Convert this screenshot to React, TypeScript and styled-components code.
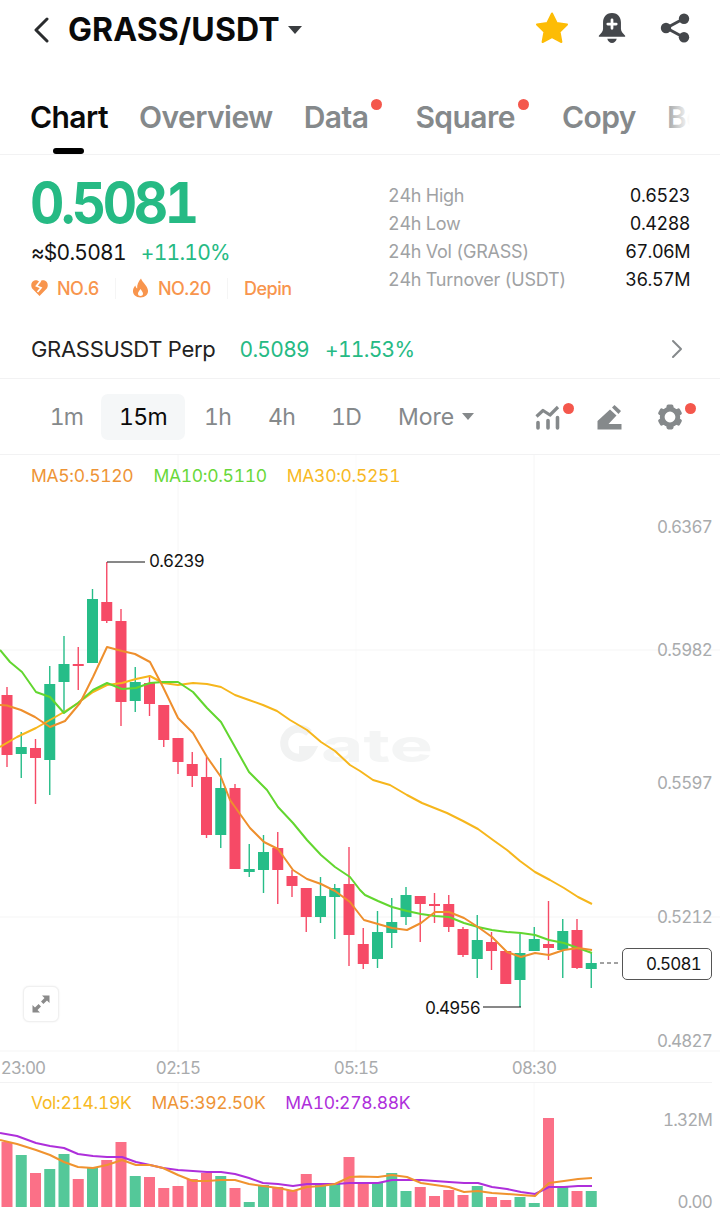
import React from "react";
import styled, { createGlobalStyle } from "styled-components";

const GlobalStyle = createGlobalStyle`
  * { box-sizing: border-box; }
  html, body { margin: 0; padding: 0; background: #fff; }
  body {
    font-family: Inter, "Noto Sans", sans-serif;
    font-variant-numeric: tabular-nums;
    color: #141414;
  }
`;

const Page = styled.div`
  width: 720px;
  height: 1210px;
  overflow: hidden;
  background: #fff;
  display: flex;
  flex-direction: column;
`;

/* ---------- header ---------- */
const Header = styled.header`
  height: 60px;
  display: flex;
  align-items: center;
  padding: 0 30px 0 32px;
`;
const Title = styled.h1`
  margin: 0 0 0 18px;
  font-size: 32px;
  line-height: 40px;
  font-weight: 700;
  letter-spacing: 0.1px;
  color: #0a0a0a;
`;
const Caret = styled.span<{ $size: number; $color: string }>`
  display: inline-block;
  margin-left: 8px;
  width: 0;
  height: 0;
  border-left: ${(p) => p.$size}px solid transparent;
  border-right: ${(p) => p.$size}px solid transparent;
  border-top: ${(p) => p.$size + 1}px solid ${(p) => p.$color};
`;
const HeaderIcons = styled.div`
  margin-left: auto;
  margin-bottom: 4px;
  display: flex;
  align-items: center;
  gap: 33px;
`;
const StarSlot = styled.span`
  display: block;
  height: 33px;
  margin-right: -5px;
`;

/* ---------- tabs ---------- */
const Tabs = styled.nav`
  position: relative;
  height: 95px;
  border-bottom: 1px solid #f2f2f3;
  display: flex;
  align-items: flex-start;
  padding: 39px 0 0 30px;
  gap: 31px;
  overflow: hidden;
  white-space: nowrap;
`;
const Tab = styled.span<{ $active?: boolean; $dot?: boolean }>`
  position: relative;
  font-size: 30px;
  line-height: 36px;
  font-weight: 600;
  letter-spacing: -0.55px;
  color: ${(p) => (p.$active ? "#0a0a0a" : "#85898b")};
  ${(p) =>
    p.$dot
      ? `margin-right: 16px; &::after { content: ""; position: absolute; right: -14px; top: 0; width: 11px; height: 11px; border-radius: 50%; background: #f4574c; }`
      : ""}
  ${(p) =>
    p.$active
      ? `&::before { content: ""; position: absolute; left: 23px; top: 49px; width: 31px; height: 6px; border-radius: 3px; background: #000; }`
      : ""}
`;
const TabFade = styled.div`
  position: absolute;
  right: 0;
  top: 0;
  bottom: 1px;
  width: 60px;
  background: linear-gradient(to right, rgba(255, 255, 255, 0), #fff 50%);
`;

/* ---------- quote ---------- */
const Quote = styled.section`
  height: 165px;
  display: grid;
  grid-template-columns: 357px 1fr;
  padding: 0 30px 0 31px;
`;
const QuoteLeft = styled.div`
  display: flex;
  flex-direction: column;
`;
const Price = styled.div`
  margin: 17px 0 0 -1px;
  font-size: 56px;
  line-height: 62px;
  font-weight: 700;
  letter-spacing: -3.6px;
  transform: scaleX(0.95);
  transform-origin: left center;
  color: #26ba84;
`;
const SubPrice = styled.div`
  margin-top: 5px;
  display: flex;
  gap: 15px;
  font-size: 21px;
  line-height: 28px;
  letter-spacing: -0.75px;
  color: #141414;
`;
const Up = styled.span`
  color: #26ba84;
`;
const TagRow = styled.div`
  margin-top: 7px;
  display: flex;
  align-items: center;
  height: 28px;
  font-size: 18px;
  font-weight: 500;
  letter-spacing: -0.5px;
  color: #f8954d;
`;
const TagItem = styled.span<{ $sep?: boolean }>`
  display: flex;
  align-items: center;
  gap: 9px;
  ${(p) => (p.$sep ? `margin-right: 16px; padding-right: 16px; border-right: 1px solid #f5f5f5;` : "")}
`;
const Stats = styled.dl`
  margin: 26px 0 0;
  display: grid;
  grid-template-columns: 1fr auto;
  grid-auto-rows: 28px;
  align-items: center;
  font-size: 18px;
  letter-spacing: -0.25px;
`;
const StatLabel = styled.dt`
  color: #9fa2a4;
`;
const StatValue = styled.dd`
  margin: 0;
  color: #141414;
  text-align: right;
  letter-spacing: -0.5px;
`;

/* ---------- perp ---------- */
const PerpRow = styled.div`
  height: 59px;
  border-bottom: 1px solid #f2f2f3;
  display: flex;
  align-items: center;
  padding: 0 36px 0 31px;
  font-size: 22px;
  letter-spacing: -0.3px;
`;
const PerpName = styled.span`
  color: #222;
  margin-right: 24px;
`;
const PerpQuote = styled.span`
  display: flex;
  gap: 16px;
  font-size: 21px;
  letter-spacing: -0.7px;
  color: #26ba84;
`;
const ChevronSlot = styled.span`
  margin-left: auto;
  display: flex;
`;

/* ---------- intervals ---------- */
const Intervals = styled.div`
  height: 76px;
  border-bottom: 1px solid #f2f2f3;
  display: flex;
  align-items: center;
  padding: 0 37px 0 32px;
`;
const Interval = styled.span<{ $active?: boolean; $w: number }>`
  width: ${(p) => p.$w}px;
  height: 46px;
  display: flex;
  align-items: center;
  justify-content: center;
  font-size: 23px;
  letter-spacing: -0.7px;
  border-radius: 7px;
  color: ${(p) => (p.$active ? "#0a0a0a" : "#85898b")};
  background: ${(p) => (p.$active ? "#f5f7f8" : "transparent")};
`;
const More = styled.span`
  margin-left: 19px;
  display: flex;
  align-items: center;
  font-size: 23px;
  color: #85898b;
`;
const ToolIcons = styled.div`
  margin-left: auto;
  display: flex;
  align-items: center;
  gap: 35px;
`;
const ToolIcon = styled.span<{ $dot?: boolean }>`
  position: relative;
  display: block;
  width: 26px;
  height: 26px;
  ${(p) =>
    p.$dot
      ? `&::after { content: ""; position: absolute; right: -12.5px; top: -1px; width: 11px; height: 11px; border-radius: 50%; background: #f4574c; }`
      : ""}
`;

/* ---------- chart ---------- */
const ChartArea = styled.section`
  position: relative;
  height: 597px;
  flex: none;
`;
const ChartSvg = styled.svg`
  display: block;
  position: absolute;
  left: 0;
  top: 0;
`;
const LegendRow = styled.div<{ $top: number }>`
  position: absolute;
  left: 31px;
  top: ${(p) => p.$top}px;
  display: flex;
  gap: 20px;
  font-size: 17.5px;
  line-height: 22px;
  letter-spacing: -0.3px;
`;
const LegendItem = styled.span<{ $color: string }>`
  color: ${(p) => p.$color};
`;
const ExpandButton = styled.div`
  position: absolute;
  left: 23px;
  top: 531px;
  width: 36px;
  height: 36px;
  border: 1px solid #f0f0f0;
  border-radius: 6px;
  background: #fff;
  box-shadow: 0 0 2px rgba(0, 0, 0, 0.08);
  display: flex;
  align-items: center;
  justify-content: center;
`;
const LastPrice = styled.div`
  position: absolute;
  left: 622px;
  top: 493px;
  width: 90px;
  height: 32px;
  border: 1px solid #555;
  border-radius: 5px;
  background: #fff;
  padding-right: 10px;
  display: flex;
  align-items: center;
  justify-content: flex-end;
  font-size: 17px;
  letter-spacing: -0.8px;
  color: #141414;
`;
const AxisLabel = styled.span<{ $top: number }>`
  position: absolute;
  right: 8px;
  top: ${(p) => p.$top}px;
  transform: translateY(-50%);
  font-size: 17px;
  line-height: 1;
  letter-spacing: -0.8px;
  color: #a9abad;
`;
const Marker = styled.span<{ $left: number; $top: number }>`
  position: absolute;
  left: ${(p) => p.$left}px;
  top: ${(p) => p.$top}px;
  transform: translateY(-50%);
  font-size: 17px;
  letter-spacing: -0.8px;
  color: #141414;
`;

/* ---------- time axis ---------- */
const TimeAxis = styled.div`
  position: relative;
  height: 31px;
  width: 712px;
  flex: none;
  border-bottom: 1px solid #f2f2f3;
`;
const TimeLabel = styled.span<{ $left: number }>`
  position: absolute;
  top: 6px;
  left: ${(p) => p.$left}px;
  transform: translateX(-50%);
  font-size: 17px;
  letter-spacing: -0.8px;
  color: #a9abad;
`;

/* ---------- volume ---------- */
const VolumeArea = styled.section`
  position: relative;
  flex: 1;
`;

/* ---------- data ---------- */
type Candle = [number, number, number, number, number]; // up, bodyTop, bodyBottom, wickTop, wickBottom
const candles: Candle[] = [
  [0, 695, 755, 687, 767], [1, 747, 754, 732, 778], [0, 748, 758, 739, 804], [1, 684, 760, 666, 795],
  [1, 664, 682, 636, 711], [0, 664, 666, 647, 690], [1, 599, 663, 589, 663], [0, 602, 621, 562, 623],
  [0, 621, 702, 609, 726], [1, 682, 701, 667, 712], [0, 683, 704, 675, 716], [0, 705, 740, 705, 747],
  [0, 738, 762, 738, 774], [0, 764, 776, 752, 787], [0, 777, 835, 757, 838], [1, 788, 835, 758, 848],
  [0, 788, 869, 784, 869], [1, 869, 872, 844, 877], [1, 852, 870, 835, 893], [0, 848, 870, 832, 904],
  [0, 876, 886, 870, 897], [0, 888, 917, 888, 932], [1, 896, 917, 877, 923], [1, 888, 897, 884, 939],
  [0, 884, 935, 847, 966], [0, 944, 964, 928, 969], [1, 932, 959, 911, 968], [1, 922, 933, 898, 948],
  [1, 895, 917, 887, 925], [0, 896, 904, 896, 942], [0, 904, 906, 893, 923], [0, 904, 927, 895, 932],
  [0, 929, 955, 927, 957], [1, 940, 959, 915, 978], [0, 942, 951, 932, 970], [0, 951, 984, 951, 984],
  [1, 953, 980, 934, 1007], [1, 939, 951, 927, 951], [0, 944, 948, 901, 960], [1, 931, 950, 919, 978],
  [0, 930, 968, 919, 969], [1, 963, 969, 952, 988],
];
const volumes: [number, number][] = [
  [0, 1142], [1, 1155], [0, 1173], [1, 1169], [1, 1154], [0, 1179], [1, 1168], [0, 1160], [0, 1142], [1, 1176],
  [0, 1177], [0, 1188], [0, 1186], [0, 1179], [0, 1173], [1, 1176], [0, 1188], [1, 1202], [1, 1185], [0, 1187],
  [0, 1190], [0, 1174], [1, 1184], [1, 1184], [0, 1157], [0, 1183], [1, 1182], [1, 1173], [1, 1191], [0, 1187],
  [0, 1196], [0, 1190], [0, 1195], [1, 1186], [0, 1197], [0, 1200], [1, 1197], [1, 1203], [0, 1118], [1, 1187],
  [0, 1191], [1, 1191],
];
const cx = (i: number) => 7 + i * 14.25;

const ma5 = "0,705 7,705.5 21,710 35,717 50,727 65,721 80,703 93,677 107,647 122,651 135,654 150,662 163,687 178,718 193,733 207,757 221,777 230,800 250,828 264,842 278,849 293,870 307,879 321,884 335,891 350,902 360,915 364,920 378,924 392,928 407,930 421,923 435,912 449,912 464,918 478,927 492,937 507,952 521,957 535,953 549,955 564,950 578,948 592,950";
const ma10 = "0,650 10,662 22,672 36,692 50,697 64,713 78,703 93,690 107,683 122,689 136,688 150,683 163,682 178,682 193,692 207,708 221,722 235,747 249,772 257,780 267,790 278,807 293,823 307,840 321,855 335,867 350,877 360,890 365,895 378,901 392,907 407,911 421,914 435,916 449,917 464,923 478,927 492,930 507,932 521,933 535,935 549,940 564,943 578,948 592,953";
const ma30 = "0,747 17,737 36,728 50,720 64,712 78,703 93,692 107,685 122,683 136,679 150,676 163,683 178,685 193,683 207,684 221,687 235,695 249,700 263,705 277,711 290,720 307,730 321,742 335,751 350,765 360,771 373,780 390,785 407,795 422,803 447,813 463,821 478,829 493,840 507,850 520,861 535,872 550,880 564,888 578,897 592,904";
const volMa5 = "0,1140 17,1144 36,1150 50,1155 64,1162 78,1167 93,1168 107,1165 122,1160 136,1165 150,1165 163,1168 178,1175 193,1181 207,1181 221,1180 235,1180 249,1184 263,1186 278,1188 293,1191 307,1187 321,1186 335,1184 350,1177 360,1176.5 378,1177 392,1175 407,1177 421,1183 435,1185 449,1187 464,1192 478,1191 492,1193 507,1194 521,1195 535,1196 549,1183 564,1181 578,1179 592,1178";
const volMa10 = "0,1133 17,1136 36,1143 50,1146 64,1148 78,1154 93,1156 107,1157 122,1157 136,1162 150,1165 163,1168 178,1170 193,1171 207,1172 221,1172 235,1174 249,1178 263,1183 278,1184 293,1186 307,1184 321,1184 335,1184 350,1183 360,1183 378,1183 392,1180 407,1180 421,1180 435,1181 449,1182 464,1183 478,1183 492,1187 507,1189 521,1192 535,1194 549,1187 564,1187 578,1186 592,1186";

const CHART_TOP = 455;

/* ---------- icons ---------- */
const BackIcon = () => (
  <svg width="18" height="26" viewBox="0 0 18 26" fill="none">
    <path d="M15 2 L4 13 L15 24" stroke="#2a2c2e" strokeWidth="3" strokeLinecap="round" strokeLinejoin="round" />
  </svg>
);
const StarIcon = () => (
  <svg width="34" height="33" viewBox="0 0 34 33">
    <path
      d="M17 1.5 L21.7 11 L32 12.5 L24.6 19.8 L26.4 30 L17 25.2 L7.6 30 L9.4 19.8 L2 12.5 L12.3 11 Z"
      fill="#fdbc05"
      stroke="#fdbc05"
      strokeWidth="2"
      strokeLinejoin="round"
    />
  </svg>
);
const BellIcon = () => (
  <svg width="30" height="30" viewBox="2.5 1 25 28.5">
    <path d="M15 1 C9 1 6.5 5.5 6.5 10 V16 C6.5 19 4.5 20.5 2.5 22.5 V23.5 H27.5 V22.5 C25.5 20.5 23.5 19 23.5 16 V10 C23.5 5.5 21 1 15 1 Z" fill="#44474b" />
    <path d="M10.5 25.5 H19.5 C19 28 17 29.5 15 29.5 C13 29.5 11 28 10.5 25.5 Z" fill="#44474b" />
    <path d="M15 7.5 V15.5 M11 11.5 H19" stroke="#fff" strokeWidth="2.6" strokeLinecap="round" />
  </svg>
);
const ShareIcon = () => (
  <svg width="30" height="30" viewBox="0 0 30 30">
    <path d="M24 5.5 L6.5 15 L24 24.5" fill="none" stroke="#44474b" strokeWidth="3" />
    <circle cx="24" cy="5.8" r="5.2" fill="#44474b" />
    <circle cx="24" cy="24.2" r="5.2" fill="#44474b" />
    <circle cx="6" cy="15" r="5.2" fill="#44474b" />
  </svg>
);
const HeartIcon = () => (
  <svg width="17" height="18" viewBox="0 0 17 18">
    <path d="M8.5 17 L1.2 9.5 C-0.8 6.5 0.4 2 4 1.3 C5.8 1 7.4 1.6 8.5 3 C9.6 1.6 11.2 1 13 1.3 C16.6 2 17.8 6.5 15.8 9.5 Z" fill="#f8954d" />
    <path d="M9.5 2 L5.5 7 L10 8.8 L6.5 13" fill="none" stroke="#fff" strokeWidth="1.7" />
  </svg>
);
const FlameIcon = () => (
  <svg width="17" height="20" viewBox="0 0 17 20" fill="#f8954d">
    <path d="M9 0.5 C10 4 15.5 7.5 16 12.5 C16.4 16.5 13 19.5 8.5 19.5 C4 19.5 0.6 16.5 1 12.5 C1.2 10.5 2.2 9 3.4 7.6 C3.6 9 4.2 10 5.2 10.5 C4.8 7 6.5 3 9 0.5 Z M8.6 11 C7.2 13 6 14 6 15.8 C6 17.2 7.2 18 8.5 18 C9.8 18 11 17.2 11 15.8 C11 14 9.6 13 8.6 11 Z" fillRule="evenodd" />
  </svg>
);
const ChevronIcon = () => (
  <svg width="14" height="20" viewBox="0 0 14 20" fill="none">
    <path d="M3 2 L11 10 L3 18" stroke="#85898b" strokeWidth="2" strokeLinecap="round" strokeLinejoin="round" />
  </svg>
);
const IndicatorIcon = () => (
  <svg width="26" height="26" viewBox="0 0 26 26">
    <path d="M1.5 12.5 L8 6.5 L15 11 L23 3" fill="none" stroke="#85898b" strokeWidth="3.2" strokeLinejoin="round" />
    <path d="M3 18.5 V24 M13 16.5 V24 M22.5 13.5 V24" stroke="#85898b" strokeWidth="3.6" strokeLinecap="round" />
  </svg>
);
const PencilIcon = () => (
  <svg width="26" height="26" viewBox="0 0 26 26" fill="#85898b">
    <path d="M18.5 1 L25 7 L22.5 10 L16 3.6 Z" />
    <path d="M14 5.5 L20.5 11.6 L12.5 20 H25.5 V25.5 H1.5 L1.5 17 Z" />
  </svg>
);
const GearIcon = () => (
  <svg width="26" height="26" viewBox="0 0 26 26">
    <circle cx="13" cy="13" r="7.8" fill="none" stroke="#85898b" strokeWidth="4.8" />
    {[30, 90, 150, 210, 270, 330].map((a) => (
      <rect key={a} x="9.5" y="0.6" width="7" height="5" rx="1.8" fill="#85898b" transform={`rotate(${a - 90} 13 13)`} />
    ))}
  </svg>
);
const ExpandIcon = () => (
  <svg width="20" height="20" viewBox="0 0 20 20" fill="#8a8a8a">
    <path d="M11 1.5 H18.5 V9 L16 6.5 L12.4 10 L10 7.6 L13.5 4 Z" />
    <path d="M9 18.5 H1.5 V11 L4 13.5 L7.6 10 L10 12.4 L6.5 16 Z" />
  </svg>
);
const Watermark = () => (
  <g>
    <path d="M309 733 A14.5 14.5 0 1 0 311.5 750 H299" fill="none" stroke="#f1f2f2" strokeWidth="8" />
    <text
      x="321"
      y="762"
      fontFamily="Inter, sans-serif"
      fontSize="46"
      fontWeight="700"
      fill="#f4f5f5"
      textLength="112"
      lengthAdjust="spacingAndGlyphs"
    >
      ate
    </text>
  </g>
);

/* ---------- page ---------- */
const candleUp = "#26bd88";
const candleDown = "#f64a66";
const volUp = "#54c899";
const volDown = "#fb7087";

export default function App() {
  return (
    <Page>
      <GlobalStyle />
      <Header>
        <BackIcon />
        <Title>GRASS/USDT</Title>
        <Caret $size={7} $color="#3a3d40" />
        <HeaderIcons>
          <StarSlot><StarIcon /></StarSlot>
          <BellIcon />
          <ShareIcon />
        </HeaderIcons>
      </Header>

      <Tabs>
        <Tab $active>Chart</Tab>
        <Tab>Overview</Tab>
        <Tab $dot>Data</Tab>
        <Tab $dot>Square</Tab>
        <Tab>Copy</Tab>
        <Tab>Bots</Tab>
        <TabFade />
      </Tabs>

      <Quote>
        <QuoteLeft>
          <Price>0.5081</Price>
          <SubPrice>
            <span>≈$0.5081</span>
            <Up>+11.10%</Up>
          </SubPrice>
          <TagRow>
            <TagItem $sep>
              <HeartIcon />
              NO.6
            </TagItem>
            <TagItem $sep>
              <FlameIcon />
              NO.20
            </TagItem>
            <TagItem>Depin</TagItem>
          </TagRow>
        </QuoteLeft>
        <Stats>
          <StatLabel>24h High</StatLabel>
          <StatValue>0.6523</StatValue>
          <StatLabel>24h Low</StatLabel>
          <StatValue>0.4288</StatValue>
          <StatLabel>24h Vol (GRASS)</StatLabel>
          <StatValue>67.06M</StatValue>
          <StatLabel>24h Turnover (USDT)</StatLabel>
          <StatValue>36.57M</StatValue>
        </Stats>
      </Quote>

      <PerpRow>
        <PerpName>GRASSUSDT Perp</PerpName>
        <PerpQuote>
          <span>0.5089</span>
          <span>+11.53%</span>
        </PerpQuote>
        <ChevronSlot><ChevronIcon /></ChevronSlot>
      </PerpRow>

      <Intervals>
        <Interval $w={69}>1m</Interval>
        <Interval $w={84} $active>15m</Interval>
        <Interval $w={65}>1h</Interval>
        <Interval $w={63}>4h</Interval>
        <Interval $w={66}>1D</Interval>
        <More>
          More
          <Caret $size={6} $color="#85898b" />
        </More>
        <ToolIcons>
          <ToolIcon $dot><IndicatorIcon /></ToolIcon>
          <ToolIcon><PencilIcon /></ToolIcon>
          <ToolIcon $dot><GearIcon /></ToolIcon>
        </ToolIcons>
      </Intervals>

      <ChartArea>
        <ChartSvg width="720" height="597" viewBox={`0 ${CHART_TOP} 720 597`}>
          {[178, 534].map((x) => (
            <line key={x} x1={x} x2={x} y1={CHART_TOP} y2={1052} stroke="#f6f6f6" />
          ))}
          <line x1={356} x2={356} y1={CHART_TOP} y2={1052} stroke="#fbfbfb" />
          {[650, 917, 1051].map((y) => (
            <line key={y} x1={0} x2={720} y1={y} y2={y} stroke="#f5f5f5" />
          ))}
          <Watermark />
          {candles.map(([up, t, b, wt, wb], i) => {
            const c = up ? candleUp : candleDown;
            const x = cx(i);
            return (
              <g key={i}>
                <line x1={x} x2={x} y1={wt} y2={wb} stroke={c} strokeWidth="1.4" />
                <rect x={x - 5.5} y={t} width="11" height={b - t} fill={c} />
              </g>
            );
          })}
          <polyline points={ma30} fill="none" stroke="#f6b61c" strokeWidth="2" strokeLinejoin="round" />
          <polyline points={ma10} fill="none" stroke="#62d62f" strokeWidth="2" strokeLinejoin="round" />
          <polyline points={ma5} fill="none" stroke="#ee8f2d" strokeWidth="2" strokeLinejoin="round" />
          <path d="M145 562 H107" stroke="#111" strokeWidth="1" />
          <path d="M483 1007 H521" stroke="#111" strokeWidth="1" />
          <path d="M600 963 H621" stroke="#444" strokeWidth="1" strokeDasharray="4 3" />
        </ChartSvg>

        <LegendRow $top={10}>
          <LegendItem $color="#ee9436">MA5:0.5120</LegendItem>
          <LegendItem $color="#68d83a">MA10:0.5110</LegendItem>
          <LegendItem $color="#f7b924">MA30:0.5251</LegendItem>
        </LegendRow>

        <AxisLabel $top={72}>0.6367</AxisLabel>
        <AxisLabel $top={195}>0.5982</AxisLabel>
        <AxisLabel $top={328}>0.5597</AxisLabel>
        <AxisLabel $top={462}>0.5212</AxisLabel>
        <AxisLabel $top={586}>0.4827</AxisLabel>

        <Marker $left={149} $top={106}>0.6239</Marker>
        <Marker $left={425} $top={553}>0.4956</Marker>

        <LastPrice>0.5081</LastPrice>
        <ExpandButton><ExpandIcon /></ExpandButton>
      </ChartArea>

      <TimeAxis>
        <TimeLabel $left={23}>23:00</TimeLabel>
        <TimeLabel $left={178}>02:15</TimeLabel>
        <TimeLabel $left={356}>05:15</TimeLabel>
        <TimeLabel $left={534}>08:30</TimeLabel>
      </TimeAxis>

      <VolumeArea>
        <ChartSvg width="720" height="127" viewBox="0 1083 720 127">
          {[178, 534].map((x) => (
            <line key={x} x1={x} x2={x} y1={1083} y2={1207} stroke="#f8f8f8" />
          ))}
          {volumes.map(([up, t], i) => (
            <rect key={i} x={cx(i) - 5.5} y={t} width="11" height={1207 - t} fill={up ? volUp : volDown} />
          ))}
          <polyline points={volMa10} fill="none" stroke="#ae2fdb" strokeWidth="2" strokeLinejoin="round" />
          <polyline points={volMa5} fill="none" stroke="#f0932f" strokeWidth="2" strokeLinejoin="round" />
        </ChartSvg>
        <LegendRow $top={9}>
          <LegendItem $color="#f7b924">Vol:214.19K</LegendItem>
          <LegendItem $color="#ee9436">MA5:392.50K</LegendItem>
          <LegendItem $color="#ae2fdb">MA10:278.88K</LegendItem>
        </LegendRow>
        <AxisLabel $top={37}>1.32M</AxisLabel>
        <AxisLabel $top={119}>0.00</AxisLabel>
      </VolumeArea>
    </Page>
  );
}
